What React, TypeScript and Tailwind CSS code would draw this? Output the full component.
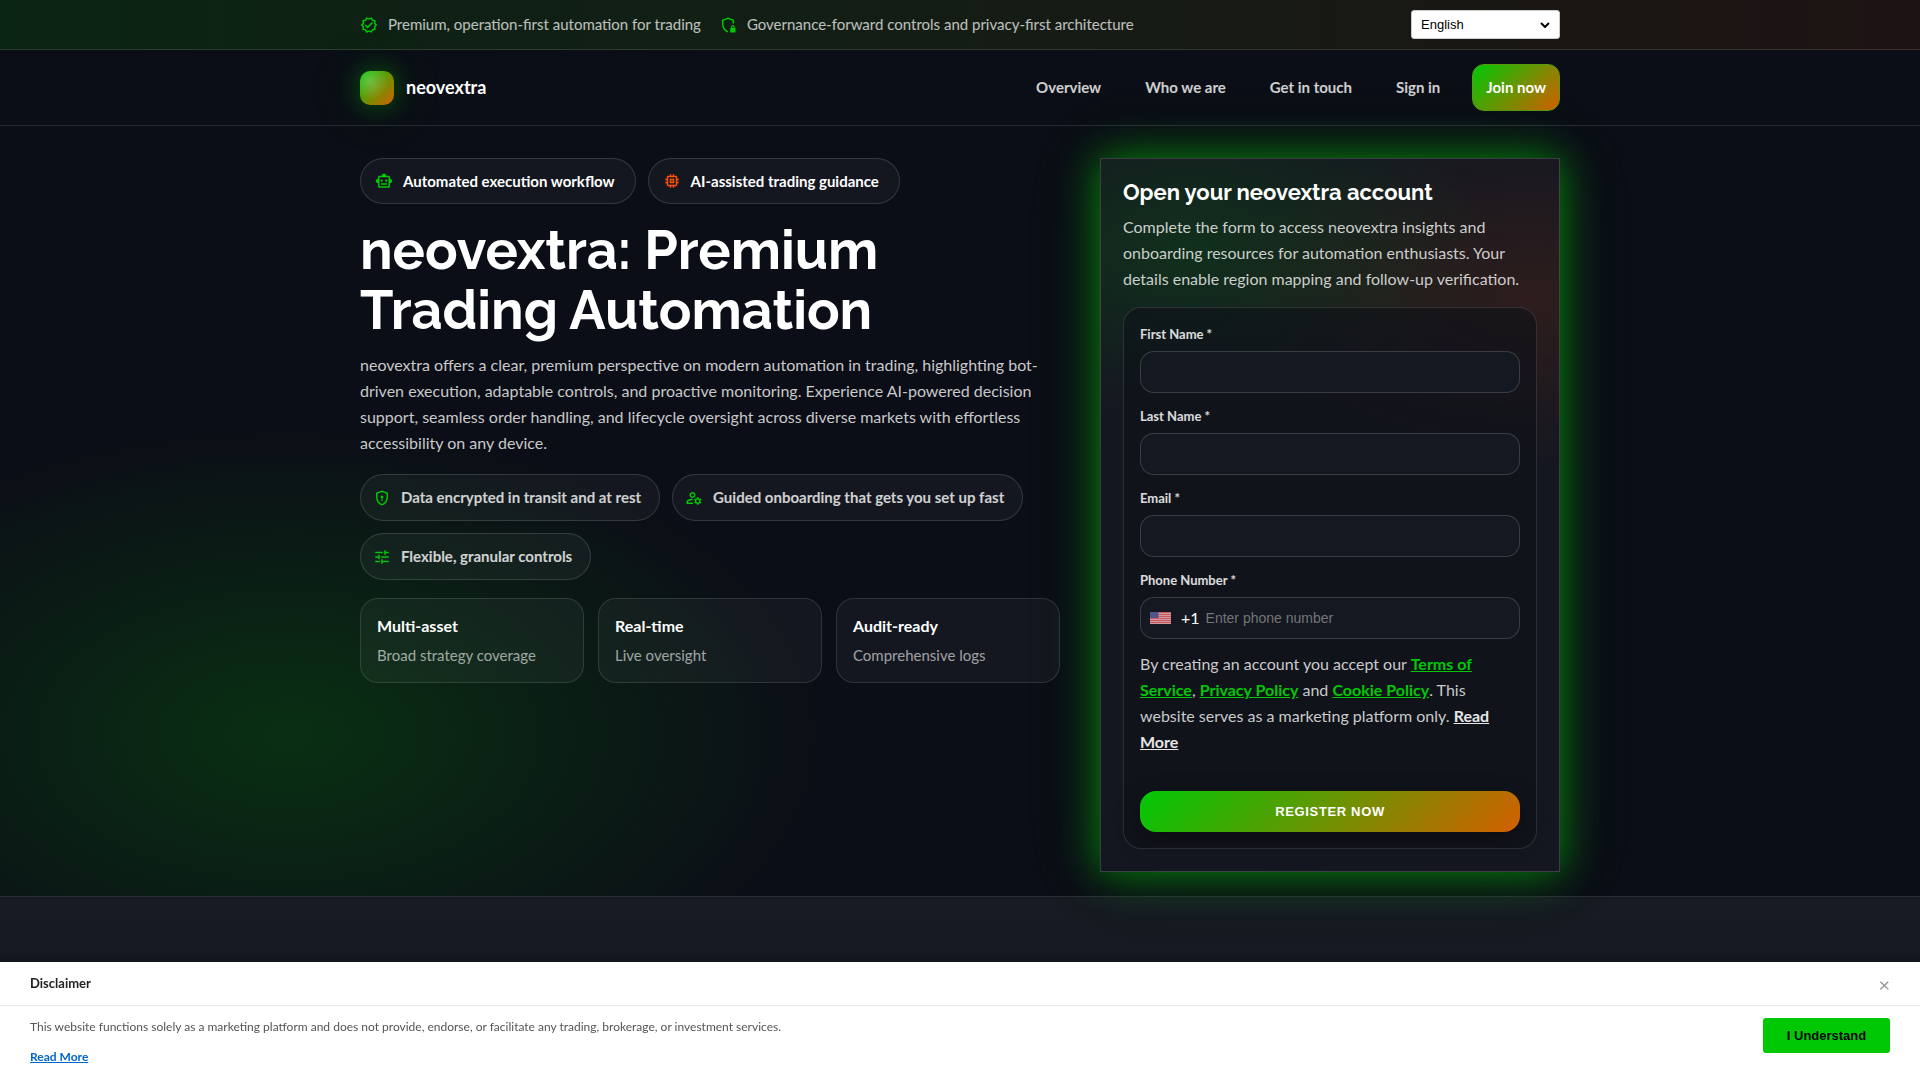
import React, { useState } from "react";
import { MdMemory, MdOutlineManageAccounts, MdOutlineSmartToy, MdOutlineVerified, MdTune } from "react-icons/md";

const navLinks = ["Overview", "Who we are", "Get in touch", "Sign in"];

const stats = [
  { title: "Multi-asset", text: "Broad strategy coverage" },
  { title: "Real-time", text: "Live oversight" },
  { title: "Audit-ready", text: "Comprehensive logs" },
];

const fields = [
  { id: "first-name", label: "First Name *", type: "text" },
  { id: "last-name", label: "Last Name *", type: "text" },
  { id: "email", label: "Email *", type: "email" },
];

function ShieldLockIcon() {
  return (
    <svg viewBox="0 0 24 24" className="h-[18px] w-[18px] fill-[#00c805]" aria-hidden="true">
      <path d="M12 22q-3.475-.875-5.738-3.988T4 11.1V5l8-3 8 3v5.1h-2V6.4l-6-2.25L6 6.4v4.7q0 3.025 1.7 5.5t4.3 3.3V22Z" />
      <path d="M15 22v-6h1v-1.500a2.500 2.500 0 0 1 5 0V16h1v6h-7Zm2.500-6h2v-1.500a1 1 0 0 0-2 0V16Z" />
    </svg>
  );
}

function ShieldKeyholeIcon() {
  return (
    <svg viewBox="0 0 24 24" className="h-[18px] w-[18px] fill-[#00c805]" aria-hidden="true">
      <path d="M11 16h2l-.5-3.500A2 2 0 0 0 14 10.700 2 2 0 0 0 12 8.700a2 2 0 0 0-2 2 2 2 0 0 0 1.500 1.800L11 16Zm1 6q-3.475-.875-5.738-3.988T4 11.1V5l8-3 8 3v6.1q0 3.800-2.262 6.913T12 22Zm0-2.100q2.600-.825 4.300-3.300t1.700-5.500V6.375l-6-2.250-6 2.250V11.1q0 3.025 1.700 5.500t4.300 3.300Z" />
    </svg>
  );
}

function FlagIcon() {
  return (
    <svg viewBox="0 0 21 12" className="h-3 w-[21px] opacity-90" aria-hidden="true">
      <rect width="21" height="12" fill="#ecc4c9" />
      {[0, 2, 4, 6, 8, 10].map((y) => (
        <rect key={y} y={y} width="21" height="1.300" fill="#dc5f6c" />
      ))}
      <rect width="8.500" height="6" fill="#555c96" />
    </svg>
  );
}

function TopBar() {
  return (
    <div className="border-b border-white/12 bg-[linear-gradient(90deg,rgba(0,200,5,0.12),rgba(255,80,0,0.08))]">
      <div className="mx-auto flex h-[49px] w-full max-w-[1200px] items-center justify-between">
        <div className="flex items-center gap-[18px] text-[15px] text-white/72">
          <span className="flex items-center gap-2.5">
            <MdOutlineVerified className="size-[18px] text-[#00c805]" />
            Premium, operation-first automation for trading
          </span>
          <span className="flex items-center gap-2.5">
            <ShieldLockIcon />
            Governance-forward controls and privacy-first architecture
          </span>
        </div>
        <div className="relative">
          <select aria-label="Language" className="block h-[29px] w-[149px] appearance-none rounded-[3px] border border-[#ccc] bg-white px-[9px] font-['Liberation_Sans',sans-serif] text-[13px] text-black">
            <option>English</option>
          </select>
          <svg viewBox="0 0 10 6" className="pointer-events-none absolute top-3 right-2.5 h-1.5 w-2.5 fill-none stroke-black stroke-2" aria-hidden="true">
            <path d="M1 1l4 4 4-4" />
          </svg>
        </div>
      </div>
    </div>
  );
}

function Header() {
  return (
    <header className="border-b border-white/12">
      <div className="mx-auto flex h-[75px] w-full max-w-[1200px] items-center justify-between">
        <a href="#" className="flex items-center gap-3">
          <span className="size-[34px] rounded-[10px] bg-[radial-gradient(circle_at_30%_30%,rgba(255,255,255,0.25),transparent_55%),linear-gradient(135deg,#00c805,#d45f00)] shadow-[0_0_24px_rgba(0,200,5,0.4),0_0_60px_rgba(0,200,5,0.15)]" />
          <span className="text-[18px] font-bold text-white">neovextra</span>
        </a>
        <nav className="flex items-center gap-5 text-[15px] font-bold">
          {navLinks.map((link) => (
            <a key={link} href="#" className="px-3 py-2.5 text-white/80">
              {link}
            </a>
          ))}
          <a href="#" className="flex h-[47px] items-center rounded-xl border border-[#5a9a10] bg-[linear-gradient(135deg,#00c805,#d45f00)] px-[13px] text-white">
            Join now
          </a>
        </nav>
      </div>
    </header>
  );
}

function Hero() {
  return (
    <section>
      <div className="flex flex-wrap gap-3">
        <span className="flex h-[46px] items-center gap-2.5 rounded-full border border-white/14 bg-white/4 pr-5 pl-3.5 text-[15px] font-bold text-white">
          <MdOutlineSmartToy className="size-[18px] text-[#00c805]" />
          Automated execution workflow
        </span>
        <span className="flex h-[46px] items-center gap-2.5 rounded-full border border-white/14 bg-white/4 pr-5 pl-3.5 text-[15px] font-bold text-white">
          <MdMemory className="size-[18px] text-[#ff5000]" />
          AI-assisted trading guidance
        </span>
      </div>
      <h1 className="mt-4 font-['Raleway','Lato',sans-serif] text-[54px] leading-[60px] font-bold text-white">
        neovextra: Premium
        <br />
        Trading Automation
      </h1>
      <p className="mt-3 max-w-[680px] text-[16px] leading-[26px] text-white/78">
        neovextra offers a clear, premium perspective on modern automation in trading, highlighting bot-driven execution, adaptable controls, and
        proactive monitoring. Experience AI-powered decision support, seamless order handling, and lifecycle oversight across diverse markets with
        effortless accessibility on any device.
      </p>
      <ul className="mt-[18px] flex flex-wrap gap-3 text-[15px] font-bold text-white/80">
        <li className="flex h-[47px] items-center gap-2.5 rounded-full border border-white/14 bg-white/4 pr-[18px] pl-3">
          <ShieldKeyholeIcon />
          Data encrypted in transit and at rest
        </li>
        <li className="flex h-[47px] items-center gap-2.5 rounded-full border border-white/14 bg-white/4 pr-[18px] pl-3">
          <MdOutlineManageAccounts className="size-[18px] text-[#00c805]" />
          Guided onboarding that gets you set up fast
        </li>
        <li className="flex h-[47px] items-center gap-2.5 rounded-full border border-white/14 bg-white/4 pr-[18px] pl-3">
          <MdTune className="size-[18px] text-[#00c805]" />
          Flexible, granular controls
        </li>
      </ul>
      <div className="mt-[18px] grid grid-cols-3 gap-3.5">
        {stats.map((stat) => (
          <div key={stat.title} className="rounded-[18px] border border-white/12 bg-white/4 px-4 py-3.5">
            <div className="text-[16px] leading-[26px] font-bold text-white">{stat.title}</div>
            <div className="mt-1 text-[15px] leading-[25px] text-white/60">{stat.text}</div>
          </div>
        ))}
      </div>
    </section>
  );
}

function SignupCard() {
  return (
    <section className="border border-white/16 bg-[#141720] bg-[radial-gradient(ellipse_300px_170px_at_90px_90px,rgba(0,200,5,0.14),transparent),radial-gradient(ellipse_320px_170px_at_430px_140px,rgba(255,80,0,0.11),transparent)] p-[22px] shadow-[0_0_36px_rgba(0,200,5,0.6),0_0_70px_rgba(0,200,5,0.15)]">
      <h2 className="font-['Raleway','Lato',sans-serif] text-[22px] leading-[22px] font-bold text-white">Open your neovextra account</h2>
      <p className="mt-[11px] text-[16px] leading-[26px] text-white/78">
        Complete the form to access neovextra insights and onboarding resources for automation enthusiasts. Your details enable region mapping and
        follow-up verification.
      </p>
      <form className="mt-[15px] rounded-[18px] border border-white/12 bg-[#0d1018]/60 p-4" onSubmit={(e) => e.preventDefault()}>
        {fields.map((field) => (
          <div key={field.id} className="mb-[13px]">
            <label htmlFor={field.id} className="block text-[13px] leading-[21px] font-bold text-white/85">
              {field.label}
            </label>
            <input id={field.id} type={field.type} className="mt-1.5 block h-[42px] w-full rounded-[14px] border border-white/16 bg-[#141820] px-3 text-white" />
          </div>
        ))}
        <label htmlFor="phone" className="block text-[13px] leading-[21px] font-bold text-white/85">
          Phone Number *
        </label>
        <div className="mt-1.5 flex h-[42px] items-center rounded-[14px] border border-white/16 bg-[#141820] px-[9px]">
          <FlagIcon />
          <span className="ml-2.5 text-[16px] text-white">+1</span>
          <input id="phone" type="tel" placeholder="Enter phone number" className="ml-1.5 min-w-0 flex-1 bg-transparent font-['Liberation_Sans',sans-serif] text-[14px] text-white placeholder:text-[#757575] focus:outline-none" />
        </div>
        <p className="mt-3 text-[16px] leading-[26px] text-white/78">
          By creating an account you accept our{" "}
          <a href="#" className="font-bold text-[#00c805] underline">Terms of Service</a>,{" "}
          <a href="#" className="font-bold text-[#00c805] underline">Privacy Policy</a> and{" "}
          <a href="#" className="font-bold text-[#00c805] underline">Cookie Policy</a>. This website serves as a marketing platform only.{" "}
          <a href="#" className="font-bold text-white/90 underline">Read More</a>
        </p>
        <button type="submit" className="mt-9 block h-[41px] w-full rounded-2xl bg-[linear-gradient(135deg,#00c805,#d45f00)] font-['Liberation_Sans',sans-serif] text-[13px] font-bold tracking-wider text-white shadow-[0_8px_24px_rgba(0,0,0,0.35)]">
          REGISTER NOW
        </button>
      </form>
    </section>
  );
}

function Disclaimer({ onClose }: { onClose: () => void }) {
  return (
    <aside className="fixed inset-x-0 bottom-0 bg-white text-[12px] text-[#555] shadow-[0_-2px_10px_rgba(0,0,0,0.2)]">
      <div className="flex h-11 items-center justify-between border-b border-[#e8e8e8] px-[30px]">
        <h3 className="text-[13px] font-bold text-[#222]">Disclaimer</h3>
        <button type="button" aria-label="Close" onClick={onClose} className="text-[20px] leading-none text-[#999]">
          ×
        </button>
      </div>
      <div className="flex items-start justify-between px-[30px] pt-3 pb-3.5">
        <div>
          <p className="leading-[18px]">
            This website functions solely as a marketing platform and does not provide, endorse, or facilitate any trading, brokerage, or investment
            services.
          </p>
          <a href="#" className="mt-3 inline-block leading-[18px] font-bold text-[#0066cc] underline">Read More</a>
        </div>
        <button type="button" onClick={onClose} className="h-[35px] w-[127px] rounded-[3px] bg-[#00c805] font-['Liberation_Sans',sans-serif] text-[13px] font-bold text-black">
          I Understand
        </button>
      </div>
    </aside>
  );
}

export default function App() {
  const [showDisclaimer, setShowDisclaimer] = useState(true);

  return (
    <div className="min-h-screen bg-[#0b0e16] bg-[radial-gradient(ellipse_540px_310px_at_15%_735px,rgba(0,200,5,0.18),transparent)] font-['Lato',sans-serif]">
      <TopBar />
      <Header />
      <main className="mx-auto grid w-full max-w-[1200px] grid-cols-[minmax(0,1fr)_460px] items-start gap-10 pt-8 pb-6">
        <Hero />
        <SignupCard />
      </main>
      <div className="border-t border-white/10 bg-[linear-gradient(180deg,#171b23,#11151d)] py-[91px]" />
      {showDisclaimer && <Disclaimer onClose={() => setShowDisclaimer(false)} />}
    </div>
  );
}
